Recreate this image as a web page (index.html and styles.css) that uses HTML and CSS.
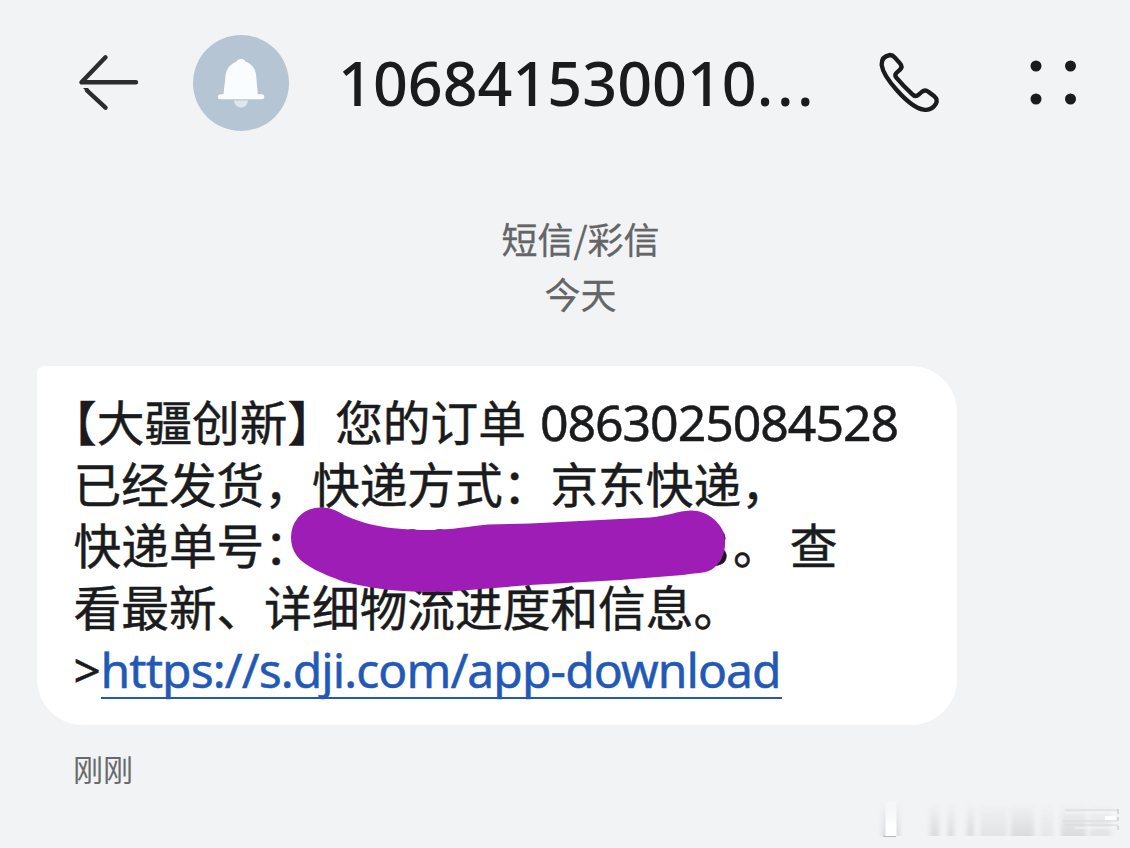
FILE: index.html
```html
<!DOCTYPE html>
<html lang="zh-CN">
<head>
<meta charset="utf-8">
<title>短信</title>
<link rel="stylesheet" href="styles.css">
</head>
<body>
<main class="screen">
  <header class="bar">
    <svg class="back" viewBox="78 52 62 62" fill="none" stroke="#2b2c2e" stroke-width="4.4" stroke-linecap="round" stroke-linejoin="round">
      <path d="M105.5 57.3 81.5 82.3H136"/>
      <path d="M87 90.500 105.5 107.7"/><path d="M83 88h5l2 3-3 1z" fill="#2b2c2e" stroke="none"/>
    </svg>
    <svg class="avatar" viewBox="0 0 96 96">
      <circle cx="48" cy="48" r="48" fill="#b6c5d3"/>
      <path d="M41 65.500h14a7 7 0 0 1-14 0z" fill="#dfe7ed"/>
      <path d="M48 24c2.600 0 4 1.300 4.700 2.700 6.300 2.200 10 7.300 10.500 14.300l1.600 18.300h4a2.500 2.500 0 0 1 0 5H27.300a2.500 2.500 0 0 1 0-5h3.200l2-18.300c.7-7 4.500-12.100 10.800-14.300.7-1.400 2.100-2.700 4.700-2.700z" fill="#fafdff"/>
    </svg>
    <h1 class="number">106841530010<span class="dots">...</span></h1>
    <svg class="phone" viewBox="50 60 198 198" fill="none" stroke="#1a1b1d" stroke-width="13" stroke-linejoin="round">
      <path d="M92 75Q100 75 106 82L122 100Q131 110 122 119L111 129Q105 135 111 143Q130 166 157 191Q168 203 178 194L187 186Q197 178 207 185L225 199Q236 208 230 221Q217 243 193 239Q160 234 112 180Q71 134 67 105Q66 79 92 75Z"/>
    </svg>
    <svg class="more" viewBox="0 0 48 46" fill="#1a1b1d">
      <circle cx="6" cy="6" r="5.500"/><circle cx="40.500" cy="6" r="5.500"/>
      <circle cx="6" cy="39" r="5.500"/><circle cx="40.500" cy="39" r="5.500"/>
    </svg>
  </header>

  <section class="divider">
    <div>短信/彩信</div>
    <div>今天</div>
  </section>

  <article class="bubble">
    <div class="line first">【大疆创新】您的订单<span class="order">0863025084528</span></div>
    <div class="line">已经发货，快递方式：京东快递，</div>
    <div class="line">快递单号：<span class="tracking"><span>00</span><span>8</span></span>。<span class="cha">查</span></div>
    <div class="line">看最新、详细物流进度和信息。</div>
    <div class="line latin"><span class="gt">&gt;</span><a class="link">https://s.dji.com/app-download</a></div>
    <svg class="scribble" viewBox="270 490 480 120">
      <path d="M321 507.500C330 507.500 336 510 344 515C365 525 391 530 430 530C452 530 470 526 488 524.500L530 523.500L650 517.500C668 516 678 511 690 510.500C708 510 720 523 724 533C727 547 724 562 711 570C703 574 692 573 683 575L620 580L530 585L450 591.500C410 593 376 590 345 582C325 575 304 566 297 556C289 546 289 529 297 519C303 511 312 507.500 321 507.500Z" fill="#9e1db6"/>
    </svg>
  </article>
  <div class="time">刚刚</div>

  <svg class="mark" viewBox="0 0 270 68">
    <defs>
      <linearGradient id="fade" x1="0" y1="0" x2="0" y2="1"><stop offset="0" stop-color="#dadbdd" stop-opacity="0"/><stop offset="1" stop-color="#dadbdd"/></linearGradient>
      <linearGradient id="white" x1="0" y1="0" x2="0" y2="1"><stop offset="0" stop-color="#fff" stop-opacity=".3"/><stop offset=".7" stop-color="#fff"/></linearGradient>
      <filter id="soft" x="-.2" width="1.400" y="-.1" height="1.200"><feGaussianBlur stdDeviation="2 .4"/></filter>
    </defs>
    <g fill="url(#fade)" filter="url(#soft)">
      <rect x="22" y="22" width="18" height="34"/><rect x="70" y="22" width="9" height="34"/>
      <rect x="88" y="22" width="6" height="34"/><rect x="107" y="22" width="7" height="34"/>
      <rect x="120" y="22" width="27" height="34" opacity=".65"/><rect x="151" y="22" width="23" height="34"/>
      <rect x="180" y="22" width="13" height="34" opacity=".5"/><rect x="201" y="22" width="25" height="34"/>
      <rect x="230" y="22" width="21" height="34" opacity=".65"/>
    </g>
    <rect x="25.500" y="22" width="11" height="34" fill="url(#white)"/>
    <path d="M23 56.500h13" stroke="#bbb"/>
    <g fill="none" stroke-width="1.200"><path d="M205 30h53M203 41h55M205 45h53" stroke="#d9dadc"/><path d="M205 33h52M215 48h43" stroke="#f6f7f8"/><path d="M245 38h11" stroke="#fff" stroke-width="4"/><path d="M258 29v5M258 37v4M258 46v4" stroke="#c5c6c8"/></g>
  </svg>
</main>
</body>
</html>
```
FILE: styles.css
```css
body {
  margin: 0;
}

.screen {
  position: relative;
  box-sizing: border-box;
  width: 1130px;
  height: 848px;
  overflow: hidden;
  padding-top: 34px;
  background: #f1f3f5;
  color: #1a1b1d;
  font-family: "Noto Sans", "Noto Sans CJK SC", sans-serif;
}

.bar {
  display: flex;
  align-items: center;
  height: 97px;
  padding-left: 78px;
}

.back {
  flex: none;
  width: 62px;
  height: 62px;
}

.avatar {
  flex: none;
  width: 96px;
  height: 96px;
  margin-left: 52.5px;
}

.number {
  flex: none;
  width: 500px;
  margin: 0 0 0 49.5px;
  font-size: 61px;
  font-weight: 500;
  line-height: 97px;
  white-space: nowrap;
}

.dots {
  letter-spacing: 3.6px;
}

.phone {
  flex: none;
  width: 66px;
  height: 66px;
  margin-left: 38px;
}

.more {
  flex: none;
  width: 48px;
  height: 46px;
  margin-left: 87.5px;
}

.divider {
  margin: 80px 0 0 30px;
  width: 1101px;
  text-align: center;
  color: #636567;
  font-size: 36px;
  line-height: 55px;
  font-family: "Noto Sans CJK SC", sans-serif;
  -webkit-text-stroke: 0.3px;
}

.bubble {
  position: relative;
  box-sizing: border-box;
  width: 920px;
  height: 359px;
  margin: 45px 0 0 37px;
  padding: 24px 0 0 36.5px;
  border-radius: 7px 46px 46px 46px;
  background: #fff;
}

.line {
  display: flex;
  height: 61.7px;
  font-family: "Noto Sans CJK SC", sans-serif;
  font-size: 47.7px;
  line-height: 61.7px;
  white-space: nowrap;
  text-spacing-trim: space-all;
  -webkit-text-stroke: 0.5px;
}

.first {
  margin-left: -24.5px;
}

.order {
  margin-left: 14px;
  padding-top: 2px;
  font-family: "Noto Sans", sans-serif;
  font-size: 50px;
  letter-spacing: -1.05px;
}

.tracking {
  display: flex;
  justify-content: space-between;
  box-sizing: border-box;
  width: 421px;
  padding: 3px 5px 0 86px;
  font-family: "Noto Sans", sans-serif;
  font-size: 50px;
  letter-spacing: -1px;
}

.cha {
  margin-left: 9px;
}

.latin {
  padding-top: 2px;
  font-family: "Noto Sans", sans-serif;
}

.gt {
  width: 27px;
}

.link {
  box-sizing: border-box;
  width: 681px;
  height: 60.5px;
  border-bottom: 2.5px solid #2259b6;
  color: #2259b6;
  font-size: 48px;
  letter-spacing: -0.91px;
}

.scribble {
  position: absolute;
  left: 233px;
  top: 124px;
  width: 480px;
  height: 120px;
}

.time {
  margin: 21px 0 0 73px;
  color: #68696b;
  font-family: "Noto Sans CJK SC", sans-serif;
  font-size: 30px;
  line-height: 44px;
}

.mark {
  position: absolute;
  left: 860px;
  top: 780px;
  width: 270px;
  height: 68px;
}
```
